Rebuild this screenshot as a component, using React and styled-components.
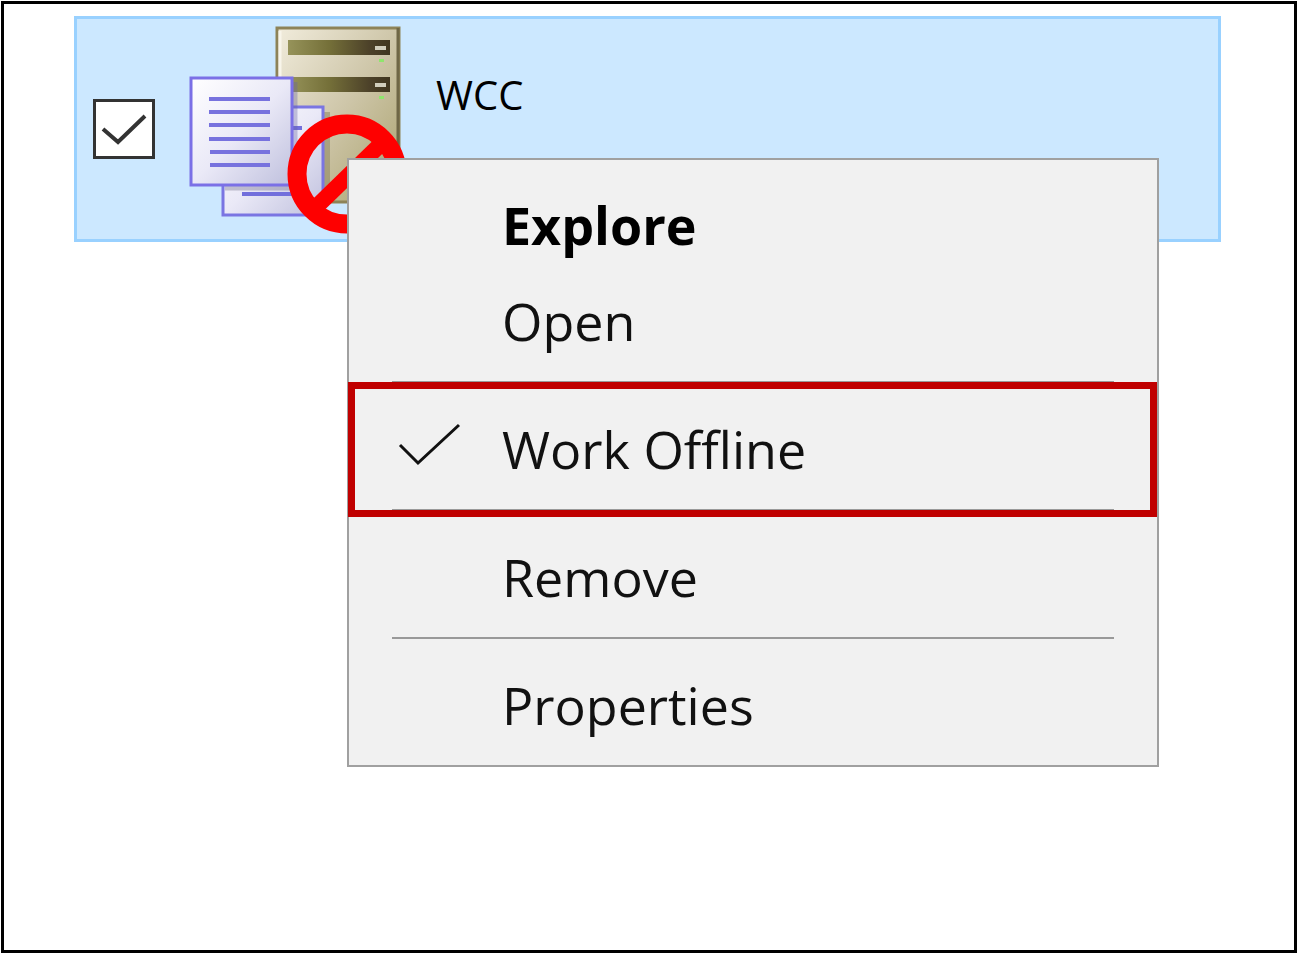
import React from "react";
import styled, { createGlobalStyle } from "styled-components";

const GlobalStyle = createGlobalStyle`
  *, *::before, *::after { box-sizing: border-box; }
  body {
    margin: 0;
    background: #fff;
    color: #111;
    font-family: "Open Sans", "Noto Sans", sans-serif;
    font-variant-ligatures: none;
  }
`;

const Page = styled.div`
  display: flex;
  min-height: 100vh;
  padding: 1px;
`;

const Frame = styled.main`
  flex: 1;
  border: 3px solid #000;
  padding: 12px 73px 12px 70px;
`;

const FileRow = styled.section`
  position: relative;
  display: flex;
  align-items: center;
  height: 226px;
  padding-left: 16px;
  background: #cce8ff;
  border: 3px solid #99d1ff;
`;

const CheckBox = styled.span`
  display: grid;
  flex: none;
  width: 62px;
  height: 60px;

  & > * {
    grid-area: 1 / 1;
    width: 100%;
    height: 100%;
  }

  svg { pointer-events: none; }
`;

const CheckInput = styled.input`
  appearance: none;
  margin: 0;
  background: #fff;
  border: 3px solid #333;
`;

const FolderIcon = styled.svg`
  flex: none;
  width: 230px;
  height: 220px;
  margin-left: 28px;
`;

const FileName = styled.label`
  align-self: flex-start;
  margin: 48px 0 0 23px;
  color: #000;
  font-size: 40px;
  line-height: 56px;
`;

const Menu = styled.div`
  position: absolute;
  top: 139px;
  left: 270px;
  right: 59px;
  padding: 14px 0 15px;
  background: #f1f1f1;
  border: 2px solid #a0a0a0;
`;

const MenuItem = styled.button`
  position: relative;
  display: flex;
  align-items: center;
  width: 100%;
  height: 96px;
  padding: 6px 0 0 43px;
  background: none;
  border: 0;
  color: ${(p) => (p.$bold ? "#000" : "#111")};
  font-family: inherit;
  font-size: 52px;
  font-weight: ${(p) => (p.$bold ? 700 : 400)};
  line-height: 64px;
  text-align: left;
`;

const CheckSlot = styled.span`
  flex: none;
  display: flex;
  align-items: center;
  width: 110px;
  height: 64px;
`;

const Separator = styled.hr`
  height: 2px;
  margin: 15px 43px;
  background: #999;
  border: 0;
`;

const Highlight = styled.span`
  position: absolute;
  inset: -16px 0 -23px -1px;
  border: 7px solid #c00000;
  pointer-events: none;
`;

function OfflineFolder() {
  return (
    <FolderIcon viewBox="184 19 230 220" aria-hidden="true">
      <defs>
        <linearGradient id="tower" x1="0" y1="0" x2="1" y2="1">
          <stop offset="0" stopColor="#f1ecdc" />
          <stop offset="0.5" stopColor="#cec6a9" />
          <stop offset="1" stopColor="#a9a16c" />
        </linearGradient>
        <linearGradient id="drive">
          <stop offset="0" stopColor="#96935a" />
          <stop offset="0.4" stopColor="#757039" />
          <stop offset="0.8" stopColor="#4c4129" />
          <stop offset="1" stopColor="#40361f" />
        </linearGradient>
        <linearGradient id="paper" x1="0" y1="0" x2="1" y2="1">
          <stop offset="0" stopColor="#ffffff" />
          <stop offset="0.5" stopColor="#eae9f7" />
          <stop offset="1" stopColor="#bfc0dd" />
        </linearGradient>
      </defs>
      <rect x="278" y="28" width="122" height="174" fill="url(#tower)" stroke="#8d8358" strokeWidth="3" />
      <path d="M399 28V202" stroke="#6f6746" strokeWidth="3" />
      <path d="M281 31V78" stroke="#f8f5ea" strokeWidth="3" />
      {[40, 77].map((y) => (
        <g key={y}>
          <rect x="289" y={y} width="102" height="15" fill="url(#drive)" />
          <rect x="376" y={y + 6} width="11" height="4" fill="#d0cdbc" />
          <rect x="380" y={y + 19} width="5" height="3" fill="#8ee66c" />
        </g>
      ))}
      <path d="M328 112V200" stroke="#88805a" strokeOpacity="0.5" strokeWidth="6" />
      <rect x="224" y="107" width="100" height="108" fill="url(#paper)" stroke="#7a75e2" strokeWidth="3" />
      <path d="M294 128H303M243 194H300" stroke="#726fdc" strokeWidth="4" />
      <path d="M296 82V184" stroke="#6462a0" strokeOpacity="0.35" strokeWidth="5" />
      <path d="M226 188H296" stroke="#77758f" strokeOpacity="0.4" strokeWidth="5" />
      <rect x="192" y="78" width="101" height="107" fill="url(#paper)" stroke="#7b70e6" strokeWidth="3" />
      <path
        d="M210 99H271M210 112H271M210 125H271M210 139H271M211 152H271M211 165H271"
        stroke="#7772de"
        strokeWidth="4"
      />
      <circle cx="348" cy="174" r="50" fill="none" stroke="#fe0000" strokeWidth="19" />
      <path d="M314 210L384 142" stroke="#fe0000" strokeWidth="16" />
    </FolderIcon>
  );
}

export default function App() {
  return (
    <>
      <GlobalStyle />
      <Page>
        <Frame>
          <FileRow>
            <CheckBox>
              <CheckInput type="checkbox" id="wcc" defaultChecked />
              <svg viewBox="0 0 62 60" aria-hidden="true">
                <path d="M10 30L25 43L52 17" fill="none" stroke="#333" strokeWidth="4" />
              </svg>
            </CheckBox>
            <OfflineFolder />
            <FileName htmlFor="wcc">WCC</FileName>
            <Menu role="menu">
              <MenuItem role="menuitem" $bold>
                <CheckSlot />
                Explore
              </MenuItem>
              <MenuItem role="menuitem">
                <CheckSlot />
                Open
              </MenuItem>
              <Separator />
              <MenuItem role="menuitemcheckbox" aria-checked="true">
                <CheckSlot>
                  <svg width="76" height="64" viewBox="0 0 76 64" aria-hidden="true">
                    <path d="M8 28L26 46L67 8" fill="none" stroke="#111" strokeWidth="3" />
                  </svg>
                </CheckSlot>
                Work Offline
                <Highlight />
              </MenuItem>
              <Separator />
              <MenuItem role="menuitem">
                <CheckSlot />
                Remove
              </MenuItem>
              <Separator />
              <MenuItem role="menuitem">
                <CheckSlot />
                Properties
              </MenuItem>
            </Menu>
          </FileRow>
        </Frame>
      </Page>
    </>
  );
}
